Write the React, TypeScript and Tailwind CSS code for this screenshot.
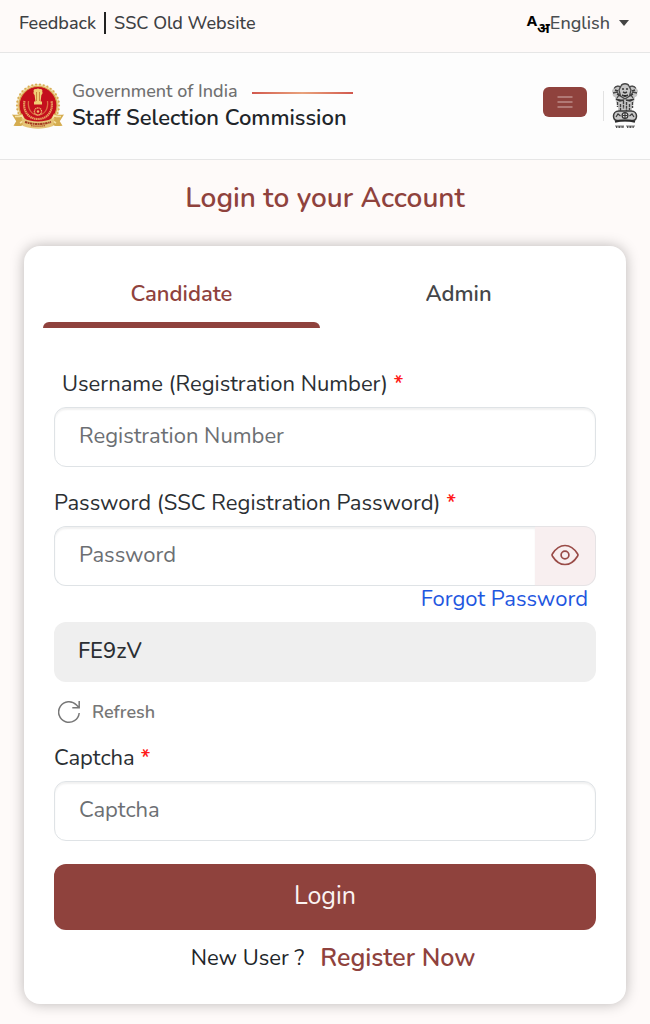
import { useState } from "react";

const FIELD =
  "h-[60px] w-full min-w-0 border border-[#dfe3e6] bg-white px-6 pb-[2px] text-[22px] text-[#212529] shadow-[inset_0_2px_2px_rgba(0,0,0,0.06)] outline-none placeholder:text-[#6c6f73]";
const LABEL = "mb-[9px] block text-[22px] leading-7 text-[#2b2f33]";

function SscLogo() {
  const beads = Array.from({ length: 34 }, (_, i) => (i / 34) * Math.PI * 2);
  return (
    <svg viewBox="0 0 52 46" className="h-[46px] w-[52px] shrink-0" role="img" aria-label="Staff Selection Commission">
      <circle cx="26" cy="22.5" r="21.5" fill="#f1dfae" />
      {beads.map((a) => (
        <circle key={a} cx={26 + Math.cos(a) * 21} cy={22.5 + Math.sin(a) * 21} r="1.1" fill="#d8ae55" />
      ))}
      <circle cx="26" cy="22.5" r="19" fill="#c40f1d" stroke="#d9a74d" strokeWidth="1.2" />
      <path d="M12.5 18c-2 10 4 18 13.500 18S41.500 28 39.500 18" fill="none" stroke="#e8a05f" strokeWidth="2.200" strokeDasharray="1.500 .5" />
      <path d="M16.500 18c-1 8 3 14 9.500 14s10.500-6 9.500-14" fill="none" stroke="#dc6d43" strokeWidth="1.300" />
      <circle cx="26" cy="28.500" r="3.600" fill="none" stroke="#edb86c" strokeWidth="1.300" strokeDasharray="1.200 .5" />
      <circle cx="26" cy="28.500" r="1.200" fill="#edb86c" />
      <path d="M21.800 8.500c-.8-1.800 1-3 2.200-2.200.8-1.200 3.200-1.200 4 0 1.200-.8 3 .4 2.200 2.200.8 1.500.2 2.800-.8 3.500l-.8 6.500h1.400v3h-8v-3h1.400l-.8-6.500c-1-.7-1.600-2-.8-3.500Z" fill="#f0cf76" />
      <path d="M24.500 9v9M27.500 9v9" stroke="#ba6a2b" strokeWidth=".7" />
      <path d="M0 31.500c4 .6 7 .4 10-1l4 8-3.500 4c-3 1-6 .5-9 .2l2.700-4.500Z" fill="#d5ad50" />
      <path d="M52 31.500c-4 .6-7 .4-10-1l-4 8 3.500 4c3 1 6 .5 9 .2l-2.700-4.500Z" fill="#d5ad50" />
      <path d="M3 33.500c3 .3 5 0 7-1l2 5-4 2.500M49 33.500c-3 .3-5 0-7-1l-2 5 4 2.500" fill="none" stroke="#f5e2a5" strokeWidth="1.500" />
      <path d="M9.500 35c11 4.500 22 4.500 33 0L41 43c-10 3.500-20 3.500-30 0Z" fill="#e5c477" />
      <path d="M13 39c9 2.700 17 2.700 26 0" fill="none" stroke="#a33a20" strokeWidth="2" strokeDasharray="2.500 .6 1.500 .5" />
      <path d="M19 42.600c5 .8 9 .8 14 0" fill="none" stroke="#b5562b" strokeWidth="1.200" strokeDasharray="1.500 .6" />
    </svg>
  );
}

function NationalEmblem() {
  return (
    <svg viewBox="0 0 28 46" className="h-[46px] w-7 shrink-0" role="img" aria-label="National Emblem of India">
      <path d="M10 3c1-3 7-3 8 0 3-1 6 0 7 2.500 2.500.8 2.500 3.500 1 4.500 1 2-.5 4-2 4l-1 5-2 2v7H7v-7l-2-2-1-5c-1.500 0-3-2-2-4C.500 9 .500 6.300 3 5.500 4 3 7 2 10 3Z" fill="#c6c6c6" />
      <path d="M10 3c1-3 7-3 8 0l2 4-1.500 6-4.500 3-4.500-3L8 7ZM3 5.500C5 2.500 8 3 9 4M25 5.500c-2-3-5-2.500-6-1.500M2 10l4-1 2 3-2 3M26 10l-4-1-2 3 2 3" fill="none" stroke="#484848" strokeWidth="1.300" />
      <path d="M11 6h2M15 6h2M12 9l2 1 2-1M11 12l3 1.500 3-1.500M4 7l3 1M24 7l-3 1M6 11l3 2M22 11l-3 2M5 16l4 2 4-1M23 16l-4 2-4-1" stroke="#383838" strokeWidth="1.400" />
      <path d="M6.500 19v5M9.500 21v7M12.500 18v8M15.500 19v9M18.500 21v6M21.500 19v6" stroke="#3f3f3f" strokeWidth="1.400" strokeDasharray="3 .8" />
      <path d="M8 28c-4 0-5.500 3-5.500 5 0 3 2 4.500 4 4.500h15c2 0 4-1.500 4-4.500 0-2-1.500-5-5.500-5Z" fill="#c9c9c9" stroke="#3b3b3b" strokeWidth="1.500" />
      <circle cx="14" cy="32.500" r="2.900" fill="#e5e5e5" stroke="#333" strokeWidth="1.200" />
      <path d="M14 30v5M11.500 32.500h5M5 34l2-3 2.500 2M18.500 33l2.500-2 2 3" fill="none" stroke="#3a3a3a" strokeWidth="1.200" />
      <path d="M4 38.800c6-1.500 14-1.500 20 0" fill="none" stroke="#2b2b2b" strokeWidth="2" />
      <path d="M4 43h9M15 43h9" stroke="#555" strokeWidth=".8" />
      <path d="M5 44h8M16 44h7" stroke="#555" strokeWidth="1.800" strokeDasharray="1.200 .6 .6 .4" />
    </svg>
  );
}

function Required() {
  return <span className="font-semibold text-[#ff1a1a]">*</span>;
}

export default function App() {
  const [visible, setVisible] = useState(false);
  return (
    <div className="min-h-screen bg-[#fefaf9] pb-5 font-['Nunito','Noto_Sans',sans-serif] text-[#212529]">
      <nav className="flex h-[53px] items-center justify-between border-b border-[#e6e6e6] pb-[6px] pl-[19px] pr-[21px] text-[18px] font-medium text-[#3d4043]">
        <div className="flex items-center">
          <a href="#feedback">Feedback</a>
          <span className="mx-2 h-[22px] w-0.5 bg-[#222]" />
          <a href="#old">SSC Old Website</a>
        </div>
        <button type="button" className="flex items-center text-[#4a4d50]">
          <span className="flex font-['Noto_Sans',sans-serif] text-[15px] font-bold leading-3 text-black" aria-hidden="true">
            <span>A</span>
            <span className="pt-[7px]">अ</span>
          </span>
          English
          <svg viewBox="0 0 10 6" className="ml-[9px] h-[6px] w-[10px]" aria-hidden="true">
            <path d="M0 0h10L5 6Z" fill="#444" />
          </svg>
        </button>
      </nav>

      <header className="flex h-[107px] items-center justify-between border-b border-[#e6e6e6] bg-[#fdfdfd] pl-3 pr-[11px]">
        <div className="flex items-center gap-2">
          <SscLogo />
          <div className="pb-px">
            <div className="flex items-center gap-[14px] text-[18px] font-medium leading-6 text-[#707070]">
              Government of India
              <span className="mt-1 h-0.5 w-[101px] bg-linear-to-r from-[#d1584e] via-[#e8a27c] to-[#d1584e]" />
            </div>
            <div className="pt-px text-[22px] font-semibold leading-7 text-[#212529]">Staff Selection Commission</div>
          </div>
        </div>
        <div className="flex items-center">
          <button type="button" aria-label="Menu" className="mb-2 mr-4 flex h-[30px] w-11 items-center justify-center rounded-md bg-[#8f423d]">
            <svg viewBox="0 0 16 14" className="h-[14px] w-4" aria-hidden="true">
              <path d="M.5 2h15M.5 7h15M.5 12h15" stroke="#bd8c88" strokeWidth="1.500" />
            </svg>
          </button>
          <span className="mr-[7px] h-[30px] w-px bg-[#e2e2e2]" />
          <NationalEmblem />
        </div>
      </header>

      <main className="px-6">
        <h1 className="py-5 text-center text-[28px] font-semibold leading-9 text-[#8f423d]">Login to your Account</h1>
        <section className="mt-[10px] rounded-2xl bg-white pb-8 shadow-[0_0_14px_rgba(0,0,0,0.27)]">
          <div role="tablist" className="grid grid-cols-2 pl-[19px] pr-[29px] text-[22px] font-semibold leading-7">
            <button type="button" role="tab" aria-selected="true" className="flex flex-col items-center pt-[34px] text-[#8f423d]">
              Candidate
              <span className="mt-[14px] h-[6px] w-full rounded-t-md bg-[#8f423d]" />
            </button>
            <button type="button" role="tab" aria-selected="false" className="flex flex-col items-center pt-[34px] text-[#444649]">
              Admin
            </button>
          </div>

          <form className="px-[30px] pt-[42px]" onSubmit={(e) => e.preventDefault()}>
            <label htmlFor="username" className={LABEL + " pl-2"}>
              Username (Registration Number) <Required />
            </label>
            <input id="username" type="text" placeholder="Registration Number" className={FIELD + " rounded-xl"} />

            <label htmlFor="password" className={LABEL + " mt-[22px]"}>
              Password (SSC Registration Password) <Required />
            </label>
            <div className="flex">
              <input id="password" type={visible ? "text" : "password"} placeholder="Password" className={FIELD + " rounded-l-xl border-r-0"} />
              <button
                type="button"
                aria-label="Show password"
                onClick={() => setVisible(!visible)}
                className="flex h-[60px] w-[61px] shrink-0 items-center justify-center rounded-r-xl border border-l-0 border-[#e6e3e5] bg-[#f8eff0] pb-[2px]"
              >
                <svg viewBox="0 0 28 22" className="h-[22px] w-7" fill="none" stroke="#994b47" strokeWidth="1.700" strokeLinejoin="round" aria-hidden="true">
                  <path d="M1.500 12.200a2 2 0 0 1 0-2.400C5 4.200 9 1.500 14 1.500s9 2.700 12.500 8.300a2 2 0 0 1 0 2.400C23 17.800 19 20.500 14 20.500s-9-2.700-12.500-8.300Z" />
                  <circle cx="14" cy="11" r="3.900" />
                </svg>
              </button>
            </div>
            <div className="flex justify-end pr-2 text-[22px] leading-[26px]">
              <a href="#forgot" className="text-[#1f57e0]">Forgot Password</a>
            </div>

            <div className="mt-[10px] flex h-[60px] items-center rounded-xl bg-[#efefef] px-6 pb-[2px] text-[22px] font-medium text-[#2b2f33]">FE9zV</div>
            <button type="button" className="mt-4 flex items-center gap-3 pl-1 text-[18px] font-semibold leading-7 text-[#777]">
              <svg viewBox="0 0 22 24" className="h-6 w-[22px]" fill="none" stroke="#777" strokeWidth="1.500" aria-hidden="true">
                <path d="M21.200 13A10.300 10.300 0 1 1 18.500 5l2.700 2.800M21.200 1v6.800h-6.900" />
              </svg>
              Refresh
            </button>

            <label htmlFor="captcha" className={LABEL + " mt-[18px]"}>
              Captcha <Required />
            </label>
            <input id="captcha" type="text" placeholder="Captcha" className={FIELD + " rounded-xl"} />

            <button type="submit" className="mt-[23px] h-[66px] w-full rounded-xl bg-[#8f423d] text-[25px] text-[#fbf3f2]">
              Login
            </button>
            <p className="mt-[14px] flex items-center justify-center gap-4 pl-4 text-[22px] leading-7">
              New User ?
              <a href="#register" className="text-[25px] font-semibold text-[#8f423d]">Register Now</a>
            </p>
          </form>
        </section>
      </main>
    </div>
  );
}
